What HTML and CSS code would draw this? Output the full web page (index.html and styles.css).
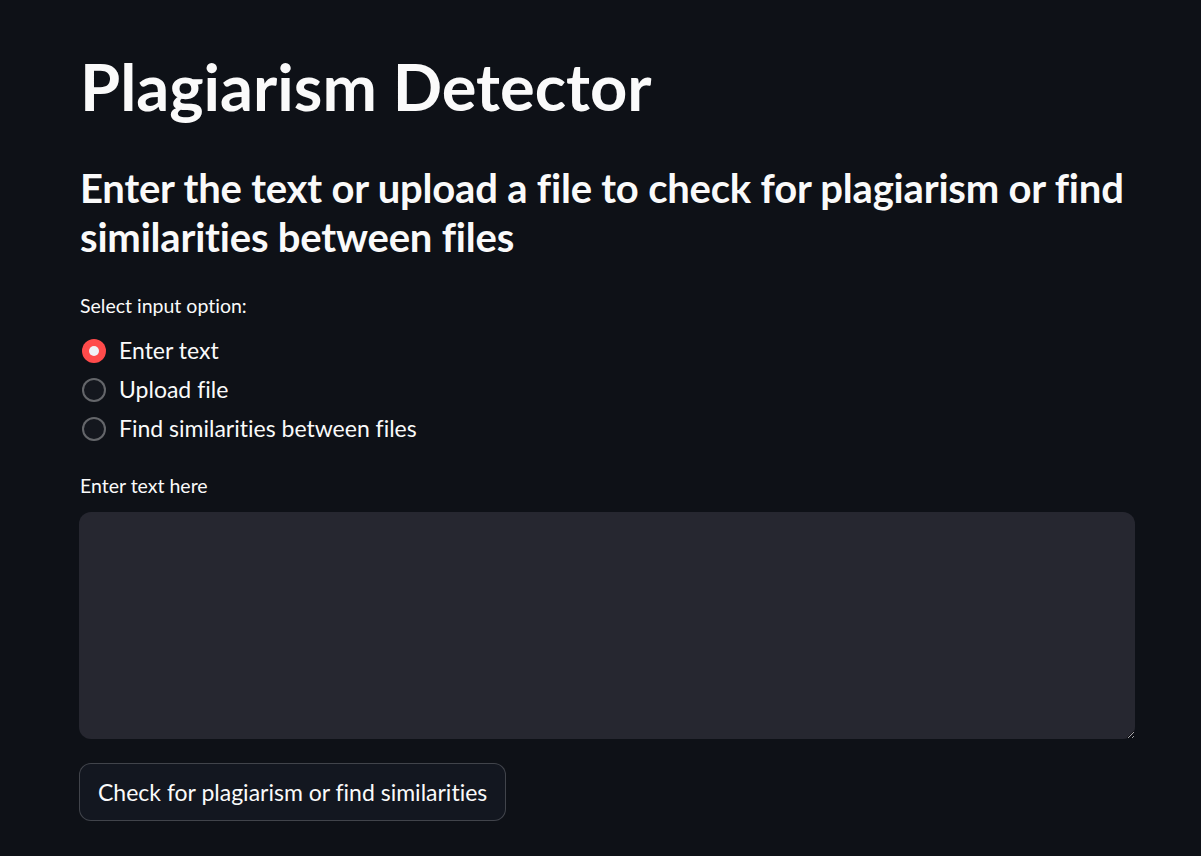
FILE: index.html
```html
<!DOCTYPE html>
<html lang="en">
<head>
<meta charset="utf-8">
<title>Plagiarism Detector</title>
<link rel="stylesheet" href="styles.css">
</head>
<body>
<main class="page">
  <h1 class="title">Plagiarism Detector</h1>
  <h3 class="subtitle">Enter the text or upload a file to check for plagiarism or find similarities between files</h3>

  <div class="field-label">Select input option:</div>
  <div class="radio-group">
    <label class="radio"><span class="dot checked"></span><span class="radio-text">Enter text</span></label>
    <label class="radio"><span class="dot"></span><span class="radio-text">Upload file</span></label>
    <label class="radio"><span class="dot"></span><span class="radio-text">Find similarities between files</span></label>
  </div>

  <div class="field-label text-label">Enter text here</div>
  <textarea class="textbox"></textarea>

  <button class="btn">Check for plagiarism or find similarities</button>
</main>
</body>
</html>
```

FILE: styles.css
```css
html, body {
  margin: 0;
  padding: 0;
  background: #0e1117;
  color: #fafafa;
  font-family: "Lato", "Liberation Sans", sans-serif;
  font-variant-ligatures: none;
  color-scheme: dark;
}

.page {
  width: 1056px;
  padding: 47px 0 0 79px;
  display: flex;
  flex-direction: column;
  align-items: flex-start;
}

.title {
  margin: 0 0 0 1px;
  font-size: 65px;
  line-height: 79px;
  font-weight: 700;
}

.subtitle {
  margin: 38px 0 0 1px;
  font-size: 40px;
  line-height: 49px;
  font-weight: 700;
  letter-spacing: -0.2px;
}

.field-label {
  margin: 29px 0 0 1px;
  font-size: 19.5px;
  line-height: 30px;
}

.radio-group {
  margin-top: 9px;
  display: flex;
  flex-direction: column;
}

.radio {
  display: flex;
  align-items: center;
  height: 39px;
  font-size: 23px;
}

.dot {
  box-sizing: border-box;
  width: 24px;
  height: 24px;
  margin: 2px 13px 0 3px;
  border-radius: 50%;
  border: 2px solid rgba(250, 250, 250, 0.35);
  background: #14171e;
  display: flex;
  align-items: center;
  justify-content: center;
}

.dot.checked {
  border: none;
  background: #ff4b4b;
}

.dot.checked::after {
  content: "";
  width: 10px;
  height: 10px;
  border-radius: 50%;
  background: #f0f2f6;
}

.text-label {
  margin-top: 24px;
}

.textbox {
  box-sizing: border-box;
  margin-top: 11px;
  width: 1056px;
  height: 227px;
  border: none;
  border-radius: 12px;
  background: #262730;
  color: #fafafa;
  resize: vertical;
  font-family: inherit;
  font-size: 23px;
  padding: 12px 18px;
  outline: none;
}

.btn {
  margin-top: 24px;
  height: 58px;
  padding: 0 18px;
  border: 1px solid rgba(250, 250, 250, 0.2);
  border-radius: 12px;
  background: #131720;
  color: #fafafa;
  font-family: inherit;
  font-variant-ligatures: none;
  font-size: 23px;
}
```
